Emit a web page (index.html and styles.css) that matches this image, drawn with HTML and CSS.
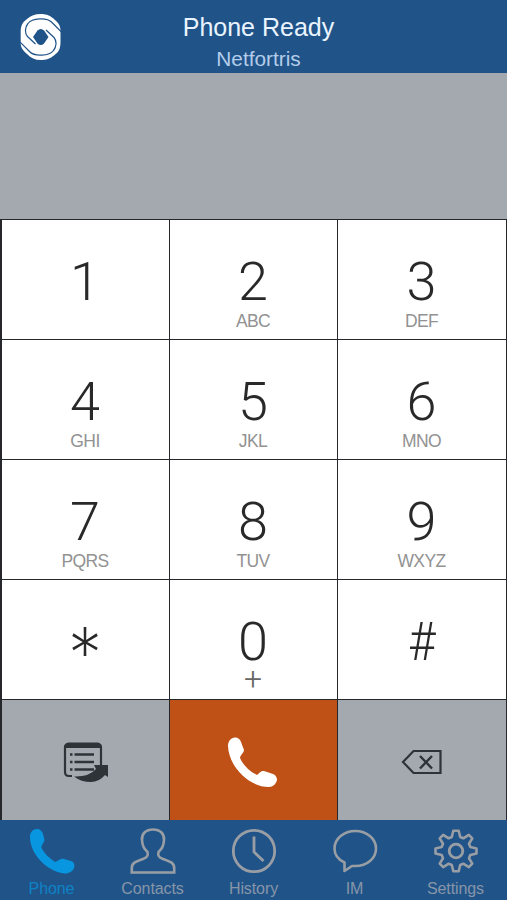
FILE: index.html
```html
<!DOCTYPE html>
<html lang="en">
<head>
<meta charset="utf-8">
<title>Phone</title>
<link rel="stylesheet" href="styles.css">
</head>
<body>
<div class="app">
  <header class="header">
    <svg class="logo" viewBox="0 0 42 48" width="42" height="48">
      <path d="M20.700 1C27 1 31 3 35 7C39 10.500 40.500 13 40.500 18V29C40.500 36 38.500 39 34.500 42C30 46 26 47 20.700 47C15 47 11 45 7 41C3 37.500 .7 35 .7 30V19C.7 12 3 9 7 6C11 2.500 15 1 20.700 1Z" fill="#fff"/>
      <path d="M20.700 16Q22.500 16 24 17.500L28.500 24L24 30.500Q22.500 32 20.700 32Q19 32 17.500 30.500L13 24L17.500 17.500Q19 16 20.700 16Z" fill="#205489"/>
      <path d="M15.500 31L7.500 23.500C4.500 20 5 14 8 10.500C12 5 27 4 32 9.500L42 19.500M26 17L34 24.500C37 28 36.500 34 33.500 37.500C29.500 43 14.500 44 9.500 38.500L-.5 28.500" fill="none" stroke="#205489" stroke-width="1.200"/>
    </svg>
    <h1 class="title">Phone Ready</h1>
    <p class="account">Netfortris</p>
  </header>
  <div class="display"></div>
  <main class="keypad">
    <button class="key"><span class="digit">1</span></button>
    <button class="key"><span class="digit">2</span><span class="letters">ABC</span></button>
    <button class="key"><span class="digit">3</span><span class="letters">DEF</span></button>
    <button class="key"><span class="digit">4</span><span class="letters">GHI</span></button>
    <button class="key"><span class="digit">5</span><span class="letters">JKL</span></button>
    <button class="key"><span class="digit">6</span><span class="letters">MNO</span></button>
    <button class="key"><span class="digit">7</span><span class="letters">PQRS</span></button>
    <button class="key"><span class="digit">8</span><span class="letters">TUV</span></button>
    <button class="key"><span class="digit">9</span><span class="letters">WXYZ</span></button>
    <button class="key"><span class="digit star">*</span></button>
    <button class="key"><span class="digit">0</span><span class="letters plus">+</span></button>
    <button class="key"><span class="digit hash">#</span></button>
    <button class="key action" aria-label="Transfer">
      <svg viewBox="0 0 46 42" width="46" height="42">
        <path d="M9 35H6Q2 35 2 31V6Q2 3 6 3H34Q38 3 38 6V24" fill="none" stroke="#2e3338" stroke-width="2.200"/>
        <path d="M1.500 7Q1.500 1.500 6 1.500H34Q38.500 1.500 38.500 7Z" fill="#2e3338"/>
        <path d="M11.500 13.500H31M11.500 21H31M11.500 28.500H31" stroke="#2e3338" stroke-width="2.500"/>
        <path d="M7 13.500H9.500M7 21H9.500M7 28.500H9.500" stroke="#2e3338" stroke-width="2.500"/>
        <path d="M11 35.500Q26 36 33 28L31 24H45V36L42 34Q36 41 28 41Q18 41 11 35.500Z" fill="#2e3338"/>
      </svg>
    </button>
    <button class="key call" aria-label="Call">
      <svg viewBox="0 0 50 50" width="50" height="50">
        <path d="M1 9C1 4 4 1 8 .5C11 .5 13 2 14 5L17 13C17 16 13 18 13 21C16 28 22 34 30 38C33 36 33 34 37 34L46 37C49 38 50 41 50 43C49 47 46 50 42 50C22 50 2 30 1 9Z" fill="#fff"/>
      </svg>
    </button>
    <button class="key action" aria-label="Delete">
      <svg viewBox="0 0 42 26" width="42" height="26">
        <path d="M2 13L12.500 2H39.500V24H12.500Z" fill="none" stroke="#2e3338" stroke-width="2.200"/>
        <path d="M19 7L31 19.500M31 7L19 19.500" stroke="#2e3338" stroke-width="2.400"/>
      </svg>
    </button>
  </main>
  <nav class="tabs">
    <a class="tab active">
      <svg viewBox="0 0 46 46" width="46" height="46">
        <path d="M1 9C1 4 4 1 8 1C11 1 13 3 14 6L15.500 12C15 15 12 17 12.500 20C15 25 20 30 26 34C30 33 31 30 35 31L42 33C45 34 46 37 45 40C44 43 40 45.500 36 45.500C18 44 1 26 1 9Z" fill="#0796df"/>
      </svg>
      <span>Phone</span>
    </a>
    <a class="tab">
      <svg viewBox="0 0 46 46" width="46" height="46">
        <path d="M23 1.500C15.500 1.500 11.500 6 12 12C12.400 19 14.500 21 17.500 24C18.500 28 17 29.500 13 31C5 34 1.800 35 1.800 40V44.500H44.200V40C44.200 35 41 34 33 31C29 29.500 27.500 28 28.500 24C31.500 21 33.600 19 34 12C34.500 6 30.500 1.500 23 1.500Z" fill="none" stroke="#999ea5" stroke-width="2.600"/>
      </svg>
      <span>Contacts</span>
    </a>
    <a class="tab">
      <svg viewBox="0 0 46 46" width="46" height="46">
        <circle cx="23" cy="23" r="20.700" fill="none" stroke="#999ea5" stroke-width="2.800"/>
        <path d="M23 8.500V24L32.500 33" fill="none" stroke="#999ea5" stroke-width="2.800"/>
      </svg>
      <span>History</span>
    </a>
    <a class="tab">
      <svg viewBox="0 0 46 46" width="46" height="46">
        <path d="M12.500 43V34.500C6 31.500 2.500 26.500 2.500 20.500C2.500 10.500 12 3 23.300 3S44 10.500 44 20.500S35 38 23.300 38H20Z" fill="none" stroke="#999ea5" stroke-width="2.600" stroke-linejoin="round"/>
      </svg>
      <span>IM</span>
    </a>
    <a class="tab">
      <svg viewBox="0 0 46 46" width="46" height="46">
        <path d="M20.300 2.700H25.700L27.200 9L30.300 10.300L35.800 6.900L39.300 10.400L36 15.800L37.300 19L43.500 20.500V25.500L37.300 27L36 30.200L39.300 35.600L35.800 39.100L30.300 35.700L27.200 37L25.700 43.300H20.300L18.800 37L15.700 35.700L10.200 39.100L6.700 35.600L10 30.200L8.700 27L2.500 25.500V20.500L8.700 19L10 15.800L6.700 10.400L10.200 6.900L15.700 10.300L18.800 9Z" fill="none" stroke="#999ea5" stroke-width="2.600" stroke-linejoin="round"/>
        <circle cx="23" cy="23" r="6.800" fill="none" stroke="#999ea5" stroke-width="2.800"/>
      </svg>
      <span>Settings</span>
    </a>
  </nav>
</div>
</body>
</html>
```

FILE: styles.css
```css
* { box-sizing: border-box; }
body { margin: 0; font-family: "Liberation Sans", Arial, sans-serif; }
.app {
  width: 507px;
  height: 900px;
  display: grid;
  grid-template-rows: 73px 146px 601px 80px;
  overflow: hidden;
}
.header {
  position: relative;
  background: #205489;
  text-align: center;
  padding: 12px 0 0 10px;
}
.logo { position: absolute; left: 20px; top: 13px; }
.title {
  margin: 0;
  font-size: 25px;
  line-height: 30px;
  font-weight: 400;
  color: #eaf4ff;
}
.account {
  margin: 5px 0 0;
  font-size: 20.800px;
  line-height: 24px;
  color: #b4cdea;
}
.display { background: #a4a9b0; }
.keypad {
  display: grid;
  grid-template-columns: 167px 167px 168px;
  grid-template-rows: repeat(4, 119px) 120px;
  gap: 1px;
  padding: 1px 1px 0 2px;
  background: #25272a;
}
.key {
  border: 0;
  margin: 0;
  padding: 40px 1px 0 0;
  background: #fff;
  display: flex;
  flex-direction: column;
  align-items: center;
  justify-content: flex-start;
}
.digit {
  font-family: Roboto, sans-serif;
  font-weight: 300;
  font-size: 54px;
  line-height: 44px;
  color: #292929;
}
.star {
  font-family: Inter, sans-serif;
  font-weight: 200;
  font-size: 68px;
  line-height: 64px;
}
.hash { transform: scaleX(0.88); }
.letters {
  font-family: "Liberation Sans", Arial, sans-serif;
  font-size: 17.500px;
  line-height: 20px;
  margin-top: 7px;
  letter-spacing: -0.600px;
  color: #929292;
}
.plus {
  font-family: Roboto, sans-serif;
  font-weight: 300;
  font-size: 32px;
  margin-top: 5px;
  letter-spacing: 0;
  color: #666;
}
.action, .call { padding: 4px 0 0; justify-content: center; }
.action { background: #a4a9b0; }
.call { background: #c05116; padding-right: 4px; }
.tabs {
  background: #205489;
  display: grid;
  grid-template-columns: repeat(5, 101px);
  padding-left: 1px;
}
.tab {
  display: flex;
  flex-direction: column;
  align-items: center;
  padding-top: 8px;
  color: #8795a8;
  font-size: 16px;
  line-height: 20px;
  letter-spacing: -0.100px;
}
.tab span { margin-top: 5px; }
.active { color: #0f82c6; }
```
